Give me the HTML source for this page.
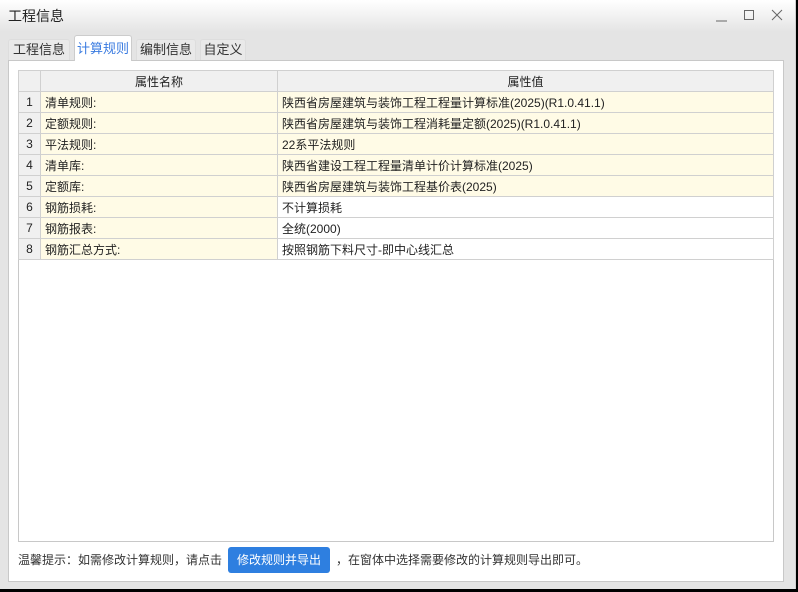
<!DOCTYPE html>
<html><head><meta charset="utf-8"><style>
*{margin:0;padding:0;box-sizing:border-box}
body{width:798px;height:592px;background:#000;font-family:"Liberation Sans","Noto Sans CJK SC",sans-serif;font-size:12px;color:#222;position:relative;overflow:hidden}
.win{position:absolute;left:0;top:0;width:796px;height:589px;background:linear-gradient(#fff 0,#e4e4e4 32px,#e4e4e4 100%);border-right:1px solid #d0d0d0}
.title{position:absolute;left:8px;top:6px;font-size:14px;color:#222}
.tab{position:absolute;top:39px;height:21px;background:#e9e9e9;border:1px solid #ddd;border-bottom:none;border-radius:3px 3px 0 0;font-size:13px;color:#333;text-align:center;line-height:20px}
.tab.act{top:35px;height:26px;background:#fff;border-color:#ccc;color:#3a7be0;line-height:26px;z-index:2}
.panel{position:absolute;left:8px;top:60px;width:776px;height:522px;background:#fff;border:1px solid #c8c8c8}
table{position:absolute;left:9px;top:9px;border-collapse:collapse;width:756px}
td,th{border:1px solid #d0d0d0;height:21px;padding:0 4px;font-weight:normal;font-size:12px;white-space:nowrap}
th{background:#f0f0f0;text-align:center}
td.n{background:#f0f0f0;text-align:center;width:22px;padding:0}
td.k{background:#fffbe6;width:237px}
td.v{background:#fffbe6}
td.w{background:#fff}
.grid{position:absolute;left:9px;top:9px;width:756px;height:472px;border:1px solid #c8c8c8}
.foot{position:absolute;left:9px;top:486px;font-size:12px;color:#333;line-height:26px;white-space:nowrap}
.btn{display:inline-block;background:#2e7fe0;color:#fff;border-radius:3px;padding:0 9px;height:26px;line-height:26px;margin:0 6px 0 6px;font-size:12px}
</style></head><body>
<div class="win">
<div class="title">工程信息</div>
<svg style="position:absolute;left:710px;top:8px" width="80" height="16">
<line x1="6" y1="13" x2="17" y2="13" stroke="#666" stroke-width="1"/>
<rect x="34.5" y="2.5" width="9" height="9" fill="none" stroke="#666"/>
<path d="M62 2L72 12M72 2L62 12" stroke="#666" stroke-width="1"/>
</svg>
<div class="tab" style="left:8px;width:62px">工程信息</div>
<div class="tab act" style="left:74px;width:58px">计算规则</div>
<div class="tab" style="left:136px;width:60px">编制信息</div>
<div class="tab" style="left:200px;width:46px">自定义</div>
<div class="panel">
<div class="grid"></div>
<table>
<tr><th style="width:22px"></th><th>属性名称</th><th>属性值</th></tr>
<tr><td class="n">1</td><td class="k">清单规则:</td><td class="v">陕西省房屋建筑与装饰工程工程量计算标准(2025)(R1.0.41.1)</td></tr>
<tr><td class="n">2</td><td class="k">定额规则:</td><td class="v">陕西省房屋建筑与装饰工程消耗量定额(2025)(R1.0.41.1)</td></tr>
<tr><td class="n">3</td><td class="k">平法规则:</td><td class="v">22系平法规则</td></tr>
<tr><td class="n">4</td><td class="k">清单库:</td><td class="v">陕西省建设工程工程量清单计价计算标准(2025)</td></tr>
<tr><td class="n">5</td><td class="k">定额库:</td><td class="v">陕西省房屋建筑与装饰工程基价表(2025)</td></tr>
<tr><td class="n">6</td><td class="k">钢筋损耗:</td><td class="w">不计算损耗</td></tr>
<tr><td class="n">7</td><td class="k">钢筋报表:</td><td class="w">全统(2000)</td></tr>
<tr><td class="n">8</td><td class="k">钢筋汇总方式:</td><td class="w">按照钢筋下料尺寸-即中心线汇总</td></tr>
</table>
<div class="foot">温馨提示：如需修改计算规则，请点击<span class="btn">修改规则并导出</span>，在窗体中选择需要修改的计算规则导出即可。</div>
</div>
</div>
</body></html>
